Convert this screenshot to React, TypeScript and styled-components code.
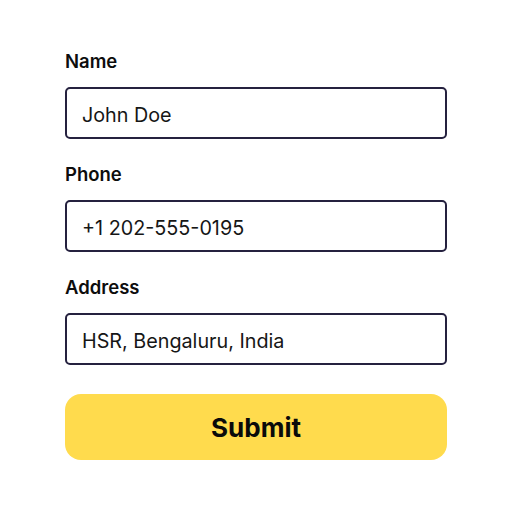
import React from 'react';
import styled, {createGlobalStyle} from 'styled-components';

const GlobalStyle = createGlobalStyle`
    body {
        margin: 0;
        background: #ffffff;
        font-family: Inter, 'Noto Sans', sans-serif;
    }
`;

const fields = [
    {label: 'Name', value: 'John Doe'},
    {label: 'Phone', value: '+1 202-555-0195'},
    {label: 'Address', value: 'HSR, Bengaluru, India'}
];

const App = () => {
    return (
        <>
            <GlobalStyle />
            <Card>
                <Form onSubmit={e => e.preventDefault()}>
                    {fields.map(field => (
                        <Field key={field.label}>
                            <Label>{field.label}</Label>
                            <Input defaultValue={field.value} />
                        </Field>
                    ))}
                    <SubmitButton type='submit'>Submit</SubmitButton>
                </Form>
            </Card>
        </>
    );
};

export default App;

const Card = styled.main`
    box-sizing: border-box;
    width: 460px;
    height: 490px;
    margin: 0 0 0 26px;
    border-radius: 24px;
    padding: 49px 0 0 39px;
`;

const Form = styled.form`
    display: flex;
    width: 382px;
    flex-direction: column;
`;

const Field = styled.div`
    display: flex;
    flex-direction: column;
    margin-bottom: 23px;

    &:nth-last-of-type(1) {
        margin-bottom: 29px;
    }
`;

const Label = styled.label`
    height: 24px;
    margin-bottom: 14px;
    font-size: 18.5px;
    font-weight: 600;
    line-height: 24px;
    color: #0d0d0d;
`;

const Input = styled.input`
    box-sizing: border-box;
    height: 52px;
    padding: 4px 15px 0;
    border: 2px solid #25213f;
    border-radius: 5px;
    font-family: Inter, 'Noto Sans', sans-serif;
    font-size: 19.75px;
    color: #161616;
    outline: none;
`;

const SubmitButton = styled.button`
    height: 66px;
    border: none;
    border-radius: 16px;
    background: #ffdb4d;
    font-family: Inter, 'Noto Sans', sans-serif;
    font-size: 26px;
    font-weight: 700;
    color: #0a0a0a;
    cursor: pointer;
`;
